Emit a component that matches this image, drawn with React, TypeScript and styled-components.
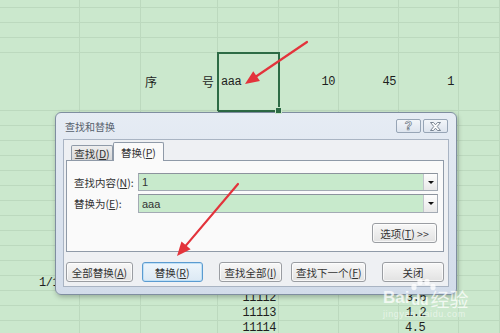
import React from 'react'
import styled, { createGlobalStyle } from 'styled-components'

const GlobalStyle = createGlobalStyle`
  html, body { margin: 0; padding: 0; }
  body {
    width: 500px;
    height: 333px;
    overflow: hidden;
    background: #cbe8cd;
    font-family: "Noto Sans CJK SC", "Noto Sans", sans-serif;
  }
`

const COLS = [80, 61, 77, 61, 60, 60, 60, 41]
const ROWS = [8, 15, 15, 15, 58, ...Array(15).fill(15)]

type Align = 'left' | 'right' | 'spread'
type CellData = { text: string; align?: Align; pad?: number; cjk?: boolean }

const DATA: Record<string, CellData> = {
  '4-2': { text: '序号', align: 'spread', pad: 4, cjk: true },
  '4-3': { text: 'aaa', align: 'left', pad: 3 },
  '4-4': { text: '10', align: 'right', pad: 3 },
  '4-5': { text: '45', align: 'right', pad: 2 },
  '4-6': { text: '1', align: 'right', pad: 4 },
  '16-0': { text: '1/1', align: 'left', pad: 39 },
  '17-3': { text: '11112', align: 'right', pad: 2 },
  '17-6': { text: '3.6', align: 'left', pad: 7 },
  '18-3': { text: '11113', align: 'right', pad: 2 },
  '18-6': { text: '1.2', align: 'left', pad: 7 },
  '19-3': { text: '11114', align: 'right', pad: 2 },
  '19-6': { text: '4.5', align: 'left', pad: 6 },
}

const UI_FONT = '"Noto Sans CJK SC", sans-serif'

const Page = styled.div`
  position: relative;
  width: 500px;
  height: 333px;
  overflow: hidden;
`

const Sheet = styled.div`
  display: grid;
  grid-template-columns: ${COLS.map(c => c + 'px').join(' ')};
  grid-template-rows: ${ROWS.map(r => r + 'px').join(' ')};
`

const Cell = styled.div<{ $align: Align; $pad: number; $cjk?: boolean; $selected?: boolean }>`
  position: relative;
  box-sizing: border-box;
  border-right: 1px solid #bcd9be;
  border-bottom: 1px solid #bcd9be;
  display: flex;
  align-items: center;
  justify-content: ${p => p.$align === 'right' ? 'flex-end' : p.$align === 'spread' ? 'space-between' : 'flex-start'};
  padding: ${p => p.$align === 'right' ? `0 ${p.$pad}px 0 0` : p.$align === 'spread' ? `0 ${p.$pad - 1}px 0 ${p.$pad}px` : `0 0 0 ${p.$pad}px`};
  font-family: ${p => p.$cjk ? UI_FONT : '"Liberation Mono", monospace'};
  font-size: 12px;
  letter-spacing: ${p => p.$cjk ? '0' : '-0.5px'};
  color: #1e1e1e;
  white-space: nowrap;
  ${p => p.$selected && `
    &::after {
      content: "";
      position: absolute;
      inset: -1px -2px -2px -1px;
      border: 2px solid #2d6b45;
    }
  `}
`

const FillHandle = styled.span`
  position: absolute;
  right: -4px;
  bottom: -4px;
  width: 5px;
  height: 5px;
  background: #2d6b45;
  border: 1px solid #cbe8cd;
  z-index: 1;
`

const Dialog = styled.div`
  position: absolute;
  left: 55px;
  top: 112px;
  width: 402px;
  height: 183px;
  box-sizing: border-box;
  border: 1px solid #7f8ea0;
  border-radius: 6px;
  background: linear-gradient(#e6ecf4, #d2dcea);
  padding: 0 7px 7px;
  display: flex;
  flex-direction: column;
  box-shadow: 1px 2px 5px rgba(0, 0, 0, 0.25);
  font-family: ${UI_FONT};
`

const TitleBar = styled.div`
  height: 26px;
  display: flex;
  align-items: center;
  justify-content: space-between;
  padding: 0 1px 0 2px;
`

const Title = styled.span`
  font-size: 10px;
  color: #56606c;
`

const TitleButtons = styled.div`
  display: flex;
  gap: 2px;
`

const CaptionBtn = styled.div`
  width: 25px;
  height: 14px;
  box-sizing: border-box;
  border: 1px solid #97a5b6;
  border-radius: 2px;
  background: linear-gradient(#f2f5f9, #dde4ee);
  display: flex;
  align-items: center;
  justify-content: center;
  font: bold 12px "Liberation Sans", sans-serif;
  color: #fff;
  -webkit-text-stroke: 0.7px #6c7888;
`

const Client = styled.div`
  flex: 1;
  box-sizing: border-box;
  border: 1px solid #a9b4c3;
  background: #eef0f3;
  padding: 2px 4px 4px 2px;
  display: flex;
  flex-direction: column;
`

const Tabs = styled.div`
  height: 18px;
  display: flex;
  align-items: flex-end;
  padding-left: 5px;
`

const Tab = styled.div<{ $active?: boolean; $w: number }>`
  position: relative;
  z-index: ${p => p.$active ? 2 : 1};
  width: ${p => p.$w}px;
  height: ${p => p.$active ? 19 : 15}px;
  margin-bottom: ${p => p.$active ? -1 : 0}px;
  box-sizing: border-box;
  border: 1px solid #8f9aa8;
  border-bottom: none;
  border-radius: 2px 2px 0 0;
  background: ${p => p.$active ? '#fafafa' : 'linear-gradient(#eeeeee, #d8d8d8)'};
  display: flex;
  align-items: center;
  justify-content: center;
  font-size: 10.5px;
  line-height: 13px;
  color: #333;
  white-space: nowrap;
`

const Panel = styled.div`
  height: 92px;
  box-sizing: border-box;
  border: 1px solid #8f9aa8;
  background: #fafafa;
  padding: 12px 5px 0 7px;
  display: flex;
  flex-direction: column;
`

const FieldRow = styled.div<{ $h: number; $mt: number }>`
  display: flex;
  align-items: center;
  height: ${p => p.$h}px;
  margin-top: ${p => p.$mt}px;
`

const Label = styled.span`
  width: 64px;
  font-size: 10.5px;
  color: #333;
  white-space: nowrap;
`

const Field = styled.div`
  flex: 1;
  height: 100%;
  box-sizing: border-box;
  border: 1px solid #a3aab4;
  border-top-color: #8c939d;
  background: #c8eacc;
  display: flex;
  align-items: center;
`

const FieldText = styled.span`
  flex: 1;
  padding-left: 3px;
  font: 11px "Liberation Sans", sans-serif;
  color: #333;
`

const DropBtn = styled.div`
  width: 14px;
  height: 100%;
  box-sizing: border-box;
  border-left: 1px solid #c2c6cc;
  background: linear-gradient(#fdfdfd, #e8e8e8);
  display: flex;
  align-items: center;
  justify-content: center;
  &::before {
    content: "";
    border-left: 3px solid transparent;
    border-right: 3px solid transparent;
    border-top: 3px solid #111;
  }
`

const OptionsRow = styled.div`
  display: flex;
  justify-content: flex-end;
  margin-top: 10px;
  padding-right: 1px;
`

const Btn = styled.div<{ $w: number; $ml?: number; $default?: boolean }>`
  width: ${p => p.$w}px;
  height: 20px;
  margin-left: ${p => p.$ml ?? 0}px;
  box-sizing: border-box;
  border: 1px solid ${p => p.$default ? '#5b9bd0' : '#9a9da2'};
  border-radius: 3px;
  background: ${p => p.$default
    ? 'linear-gradient(#eef6fc, #dce9f4)'
    : 'linear-gradient(#f8f8f8, #e2e2e2)'};
  box-shadow: inset 0 0 0 1px ${p => p.$default ? '#bfe0f6' : 'rgba(255,255,255,0.7)'};
  display: flex;
  align-items: center;
  justify-content: center;
  font-size: 10.5px;
  line-height: 13px;
  color: #333;
  white-space: nowrap;
`

const ButtonRow = styled.div`
  display: flex;
  margin-top: 10px;
`

const Arrows = styled.svg`
  position: absolute;
  left: 0;
  top: 0;
  pointer-events: none;
`

const Watermark = styled.div`
  position: absolute;
  left: 383px;
  top: 276px;
  display: flex;
  flex-direction: column;
  align-items: flex-start;
  color: rgba(255, 255, 255, 0.75);
`

const Logo = styled.div`
  display: flex;
  align-items: flex-end;
  font: bold 17px "Liberation Sans", sans-serif;
  height: 32px;
`

const Paw = styled.span`
  position: relative;
  padding: 0 2px;
  font-size: 14px;
`

const Toes = styled.svg`
  position: absolute;
  left: 1px;
  top: -14px;
`

const LogoCn = styled.span`
  font: 19px ${UI_FONT};
  line-height: 22px;
  margin-bottom: -2px;
`

const Url = styled.span`
  font: 9px "Liberation Sans", sans-serif;
  letter-spacing: 0.6px;
  margin-top: 1px;
  color: rgba(255, 255, 255, 0.55);
`

const Key = ({ k }: { k: string }) => <>(<u>{k}</u>)</>

const arrow = (x1: number, y1: number, x2: number, y2: number) => {
  const dx = x2 - x1
  const dy = y2 - y1
  const len = Math.hypot(dx, dy)
  const ux = dx / len
  const uy = dy / len
  const bx = x2 - ux * 14
  const by = y2 - uy * 14
  const nx = -uy
  const ny = ux
  return {
    line: { x1, y1, x2: bx + ux * 2, y2: by + uy * 2 },
    head: `${x2},${y2} ${bx + nx * 6},${by + ny * 6} ${bx - nx * 6},${by - ny * 6}`,
  }
}

const ARROWS = [arrow(307, 42, 245, 84), arrow(238, 184, 177, 256)]

export default function App() {
  return (
    <Page>
      <GlobalStyle />
      <Sheet>
        {ROWS.map((_, r) =>
          COLS.map((_, c) => {
            const d = DATA[`${r}-${c}`]
            const selected = r === 4 && c === 3
            return (
              <Cell
                key={`${r}-${c}`}
                $align={d?.align ?? 'left'}
                $pad={d?.pad ?? 0}
                $cjk={d?.cjk}
                $selected={selected}
              >
                {d?.align === 'spread'
                  ? d.text.split('').map(ch => <span key={ch}>{ch}</span>)
                  : d?.text}
                {selected && <FillHandle />}
              </Cell>
            )
          })
        )}
      </Sheet>

      <Dialog>
        <TitleBar>
          <Title>查找和替换</Title>
          <TitleButtons>
            <CaptionBtn>?</CaptionBtn>
            <CaptionBtn>
              <svg width="11" height="9" viewBox="0 0 11 9">
                <polygon
                  points="0.5,0.5 3.5,0.5 5.5,2.8 7.5,0.5 10.5,0.5 7.2,4.5 10.5,8.5 7.5,8.5 5.5,6.2 3.5,8.5 0.5,8.5 3.8,4.5"
                  fill="#fff"
                  stroke="#6c7888"
                  strokeWidth="0.9"
                />
              </svg>
            </CaptionBtn>
          </TitleButtons>
        </TitleBar>

        <Client>
          <Tabs>
            <Tab $w={42}>查找<Key k="D" /></Tab>
            <Tab $w={51} $active>替换<Key k="P" /></Tab>
          </Tabs>
          <Panel>
            <FieldRow $h={18} $mt={0}>
              <Label>查找内容<Key k="N" />:</Label>
              <Field>
                <FieldText>1</FieldText>
                <DropBtn />
              </Field>
            </FieldRow>
            <FieldRow $h={19} $mt={3}>
              <Label>替换为<Key k="E" />:</Label>
              <Field>
                <FieldText>aaa</FieldText>
                <DropBtn />
              </Field>
            </FieldRow>
            <OptionsRow>
              <Btn $w={65}>选项<Key k="T" />&nbsp;&gt;&gt;</Btn>
            </OptionsRow>
          </Panel>
          <ButtonRow>
            <Btn $w={67}>全部替换<Key k="A" /></Btn>
            <Btn $w={61} $ml={9} $default>替换<Key k="R" /></Btn>
            <Btn $w={64} $ml={16}>查找全部<Key k="I" /></Btn>
            <Btn $w={75} $ml={9}>查找下一个<Key k="F" /></Btn>
            <Btn $w={62} $ml={16}>关闭</Btn>
          </ButtonRow>
        </Client>
      </Dialog>

      <Watermark>
        <Logo>
          <span>Bai</span>
          <Paw>
            <Toes width="26" height="14" viewBox="0 0 26 14">
              <ellipse cx="4" cy="9" rx="2.6" ry="3.2" fill="rgba(255,255,255,0.75)" />
              <ellipse cx="10" cy="4" rx="2.6" ry="3.2" fill="rgba(255,255,255,0.75)" />
              <ellipse cx="17" cy="4" rx="2.6" ry="3.2" fill="rgba(255,255,255,0.75)" />
              <ellipse cx="23" cy="9" rx="2.6" ry="3.2" fill="rgba(255,255,255,0.75)" />
            </Toes>
            du
          </Paw>
          <LogoCn>经验</LogoCn>
        </Logo>
        <Url>jingyan.baidu.com</Url>
      </Watermark>

      <Arrows width="500" height="333" viewBox="0 0 500 333">
        {ARROWS.map((a, i) => (
          <g key={i}>
            <line {...a.line} stroke="#e3333b" strokeWidth="2.2" strokeLinecap="round" />
            <polygon points={a.head} fill="#e3333b" />
          </g>
        ))}
      </Arrows>
    </Page>
  )
}
